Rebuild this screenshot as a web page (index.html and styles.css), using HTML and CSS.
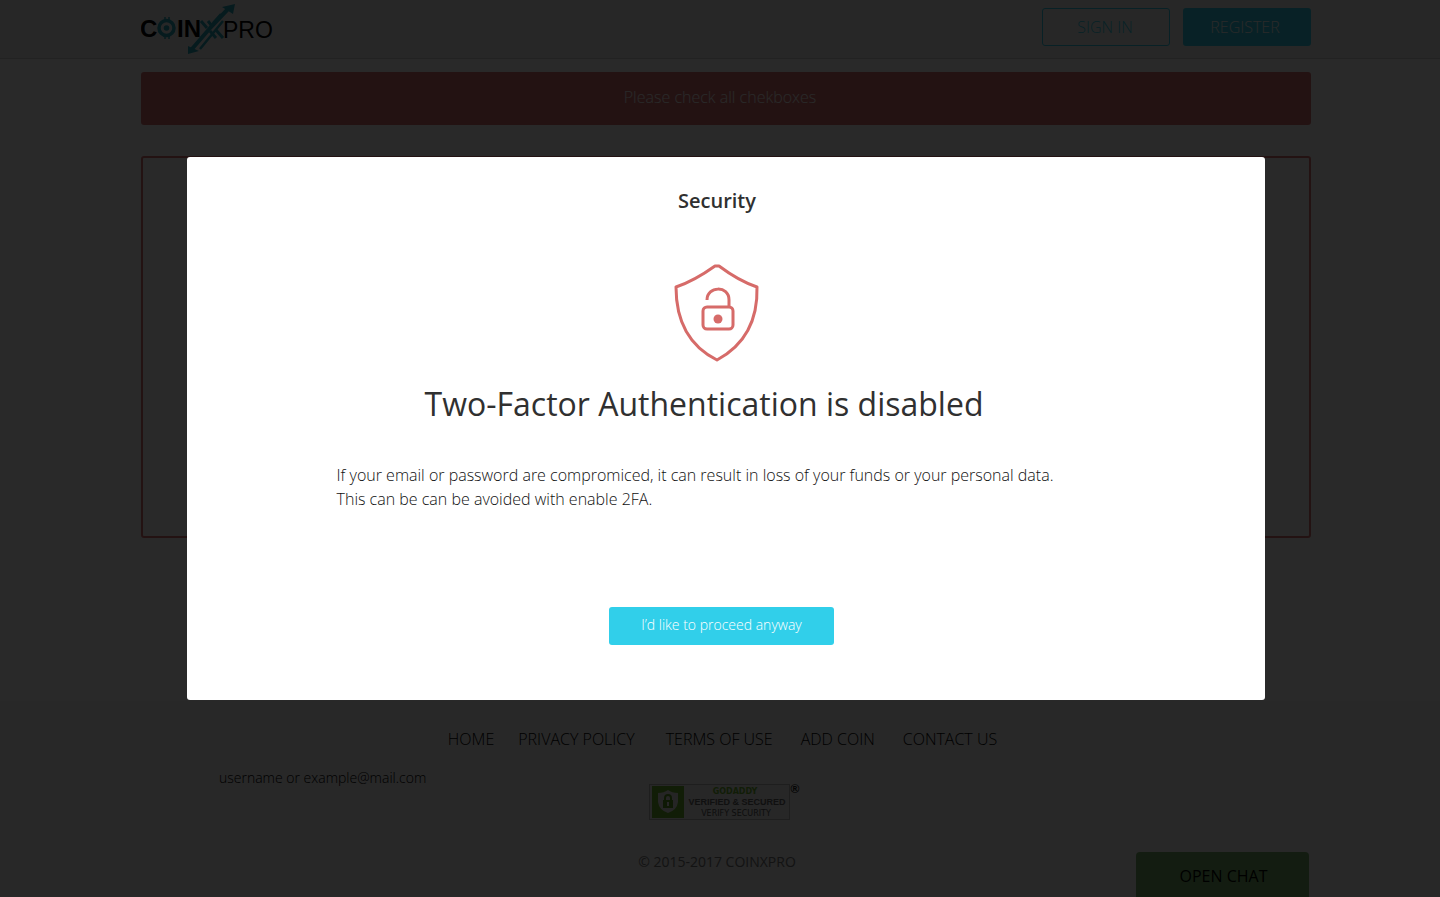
FILE: index.html
```html
<!DOCTYPE html>
<html lang="en">
<head>
<meta charset="utf-8">
<title>CoinXPro</title>
<meta name="viewport" content="width=device-width, initial-scale=1">
<link rel="stylesheet" href="styles.css">
</head>
<body>
<div class="page">
  <header class="header">
    <div class="container header-row">
      <a class="logo" href="#" aria-label="CoinXPro">
        <svg width="134" height="54" viewBox="0 0 134 54">
          <g class="logo-bold">
            <text x="-1" y="35">C</text>
            <text x="36" y="35">IN</text>
          </g>
          <text class="logo-thin" x="82" y="36">PRO</text>
          <g fill="none" stroke="#28a5bb">
            <circle cx="25.500" cy="26" r="7.500" stroke-width="3.500"/>
            <path d="M24 15v3M28 15v3M24 34v3M28 34v3" stroke-width="1.500"/>
            <path d="M51 47L70 25M69 26L87 7" stroke-width="4"/>
            <path d="M59 47L82 19M72 21L80 12" stroke-width="2.500"/>
            <path d="M60 19L66 26M67 19L71 24M69 29L75 36M75 28L82 36" stroke-width="3"/>
          </g>
          <circle cx="25.500" cy="26" r="2.800" fill="#28a5bb"/>
          <path d="M94 2L92 12L81 5ZM47 52L47 44L58 49Z" fill="#28a5bb"/>
        </svg>
      </a>
      <div class="account">
        <button class="btn btn-outline" type="button">SIGN IN</button>
        <button class="btn btn-solid" type="button">REGISTER</button>
      </div>
    </div>
  </header>
  <main class="container main">
    <p class="alert">Please check all chekboxes</p>
    <section class="panel"></section>
  </main>
  <footer class="footer">
    <nav class="links">
      <a class="link-home" href="#">HOME</a>
      <a class="link-privacy" href="#">PRIVACY POLICY</a>
      <a href="#">TERMS OF USE</a>
      <a href="#">ADD COIN</a>
      <a href="#">CONTACT US</a>
    </nav>
    <p class="account-hint">username or example@mail.com</p>
    <a class="seal" href="#" aria-label="GoDaddy verified and secured">
      <svg width="152" height="38" viewBox="0 0 152 38">
        <rect x="1.500" y="1.500" width="140" height="35" fill="#eee" stroke="#bbb"/>
        <rect x="4" y="3" width="32" height="32" fill="#6cb52d"/>
        <path d="M20 7Q24 10 30 10V19Q29 27 20 30Q11 27 10 19V10Q16 10 20 7Z" fill="#e4e4e4"/>
        <rect x="15" y="17" width="10" height="8" fill="#5a9d22"/>
        <path d="M17 17V15Q17 12 20 12Q23 12 23 15V17" fill="none" stroke="#5a9d22" stroke-width="2"/>
        <path d="M20 19V23" stroke="#eee" stroke-width="2"/>
        <text class="seal-brand" x="87" y="11">GODADDY</text>
        <text class="seal-main" x="89" y="22">VERIFIED &amp; SECURED</text>
        <text class="seal-sub" x="88" y="33">VERIFY SECURITY</text>
        <text class="seal-mark" x="147" y="10">®</text>
      </svg>
    </a>
    <p class="copyright">© 2015-2017 COINXPRO</p>
  </footer>
  <button class="chat" type="button">OPEN CHAT</button>
</div>
<div class="overlay">
  <div class="modal" role="dialog" aria-modal="true" aria-labelledby="modal-title">
    <h2 class="modal-name">Security</h2>
    <svg class="shield" width="86" height="100" viewBox="0 0 86 100" fill="none" stroke="#d66b69" stroke-width="3" stroke-linejoin="round">
      <path d="M41 3Q20 18 2 24C2 60 17 84 43 97C69 83 84 60 83 24Q65 18 45 3Z"/>
      <rect x="29" y="44" width="30" height="22" rx="4"/>
      <path d="M33 37C33 23 55 22 55 37V44"/>
      <circle cx="44" cy="56" r="4.500" fill="#d66b69" stroke="none"/>
    </svg>
    <h1 class="modal-title" id="modal-title">Two-Factor Authentication is disabled</h1>
    <p class="modal-text">If your email or password are compromiced, it can result in loss of your funds or your personal data.<br>This can be can be avoided with enable 2FA.</p>
    <button class="proceed" type="button">I’d like to proceed anyway</button>
  </div>
</div>
</body>
</html>
```
FILE: styles.css
```css
* { box-sizing: border-box; }
body {
  margin: 0;
  font-family: "Open Sans", sans-serif;
  font-size: 16px;
  font-weight: 300;
  line-height: 24px;
  color: #000;
  background: #fff;
}
p, h1, h2 { margin: 0; font-weight: 300; }
a { color: inherit; text-decoration: none; }
button { font: inherit; border: 0; cursor: pointer; }
svg { display: block; }

.page {
  min-height: 100vh;
  display: flex;
  flex-direction: column;
  position: relative;
}
.container {
  width: 100%;
  max-width: 1182px;
  margin: 0 auto;
  padding-left: 12px;
}
.header { background: #f3f3f3; border-bottom: 1px solid #d0d0d0; }
.header-row { display: flex; justify-content: space-between; height: 58px; }
.logo { padding-top: 2px; }
.logo-bold { font: 700 24px "Liberation Sans", sans-serif; }
.logo-thin { font: 400 23px "Liberation Sans", sans-serif; }
.account { display: flex; gap: 13px; padding-top: 8px; }
.btn { width: 128px; height: 38px; border-radius: 3px; padding: 0 2px 0 0; }
.btn-outline { background: transparent; border: 1px solid #31cfea; color: #31cfea; }
.btn-solid { background: #31cfea; color: #fff; padding-right: 4px; }

.main { flex: 1; padding-top: 13px; }
.alert {
  height: 53px;
  padding: 13px 12px 0 0;
  border-radius: 3px;
  background: #d97373;
  color: #fff;
  text-align: center;
}
.panel { height: 382px; margin-top: 31px; border: 2px solid #d97373; border-radius: 3px; }

.footer {
  display: flex;
  flex-direction: column;
  padding: 26px 0 23px;
  background: #f4f4f4;
}
.links { display: flex; justify-content: center; gap: 28px; padding-left: 5px; height: 39px; }
.link-home { margin-right: -4px; }
.link-privacy { margin-right: 3px; }
.account-hint { font-size: 14px; padding-left: 219px; height: 17px; }
.seal { align-self: center; padding-left: 8px; height: 67px; }
.seal text { text-anchor: middle; }
.seal-brand { font: 700 8px "DejaVu Sans", sans-serif; fill: #6cb52d; }
.seal-main { font: 700 9px "Liberation Sans", sans-serif; fill: #666; }
.seal-sub { font: 400 8px "DejaVu Sans", sans-serif; fill: #555; }
.seal-mark { font: 700 12px "Liberation Sans", sans-serif; fill: #222; }
.copyright { font-size: 14px; font-weight: 400; text-align: center; padding-right: 6px; color: #777; }
.chat {
  position: absolute;
  right: 131px;
  bottom: 0;
  width: 173px;
  height: 45px;
  padding: 2px 0 0 2px;
  border-radius: 4px 4px 0 0;
  background: #76b068;
  font-weight: 400;
}

.overlay {
  position: fixed;
  inset: 0;
  padding: 157px 24px 24px 36px;
  background: rgba(0, 0, 0, .84);
}
.modal {
  display: flex;
  flex-direction: column;
  align-items: center;
  width: 100%;
  max-width: 1078px;
  margin: 0 auto;
  padding: 30px 0 55px;
  border-radius: 3px;
  background: #fff;
  color: #303030;
}
.modal-name { margin-right: 18px; font-size: 20px; font-weight: 600; line-height: 28px; }
.shield { margin: 48px 18px 0 0; }
.modal-title { margin: 19px 44px 0 0; font-size: 32px; font-weight: 400; line-height: 44px; }
.modal-text { margin: 37px 62px 0 0; color: #101010; }
.proceed {
  width: 225px;
  height: 38px;
  margin: 96px 9px 0 0;
  padding: 0 0 2px;
  border-radius: 3px;
  background: #31cfea;
  color: #fff;
  font-size: 14px;
  font-weight: 300;
}
```
